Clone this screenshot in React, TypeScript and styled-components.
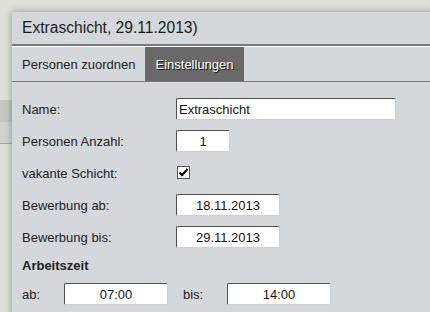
import styled, { createGlobalStyle } from "styled-components";

const GlobalStyle = createGlobalStyle`
  html, body {
    margin: 0;
    padding: 0;
    background: #dfdfda;
  }
  body {
    font-family: "Liberation Sans", Arial, sans-serif;
    color: #222;
  }
`;

const StyledPage = styled.div`
  position: relative;
  width: 430px;
  height: 312px;
  overflow: hidden;
  display: flex;
  flex-direction: column;
`;

// page content lying behind the dialog, only a few px of it show on the left
const StyledBackBand = styled.div<{ $tone: string; $height: number }>`
  height: ${(p) => p.$height}px;
  background: ${(p) => p.$tone};
  flex-shrink: 0;
`;

const StyledDialog = styled.div`
  position: absolute;
  left: 12px;
  top: 12px;
  width: 440px;
  height: 320px;
  background: #d5d8db;
  box-shadow: 0 0 7px rgba(0, 0, 0, 0.35);
  display: flex;
  flex-direction: column;
`;

const StyledHeader = styled.div`
  height: 32px;
  padding: 0 10px;
  display: flex;
  align-items: center;
  font-size: 15.6px;
  color: #1c1c1c;
  border-bottom: 2px solid #7a7a7a;
`;

const StyledTabBar = styled.div`
  display: flex;
  height: 34px;
  border-top: 1px solid #ffffff;
  border-bottom: 1px solid #7a7a7a;
`;

const StyledTab = styled.div<{ $active?: boolean }>`
  display: flex;
  align-items: center;
  padding: 0 10px;
  font-size: 13px;
  color: ${(p) => (p.$active ? "#ffffff" : "#222")};
  background: ${(p) => (p.$active ? "#696969" : "transparent")};
  text-shadow: ${(p) => (p.$active ? "1px 1px 0 #1a1a1a" : "none")};
`;

const StyledBody = styled.div`
  padding: 16px 10px 0 10px;
  display: flex;
  flex-direction: column;
  gap: 10px;
`;

const StyledRow = styled.div`
  display: grid;
  grid-template-columns: 154px auto;
  align-items: center;
  height: 22px;
  font-size: 13px;
`;

const StyledInput = styled.input<{ $width: number; $center?: boolean }>`
  box-sizing: border-box;
  width: ${(p) => p.$width}px;
  height: 22px;
  margin: 0;
  padding: 0 2px;
  font-family: "Liberation Sans", Arial, sans-serif;
  font-size: 13px;
  color: #141414;
  text-align: ${(p) => (p.$center ? "center" : "left")};
  background: #ffffff;
  border: 1px solid;
  border-color: #505050 #d0d0d0 #d0d0d0 #505050;
  border-radius: 2px;
  outline: none;
`;

const StyledCheck = styled.span`
  box-sizing: border-box;
  width: 13px;
  height: 13px;
  margin: -2px 0 0 1px;
  background: #fff;
  border: 1px solid #555;
  display: flex;
  align-items: center;
  justify-content: center;
`;

const StyledSection = styled.div`
  font-size: 13px;
  font-weight: bold;
  height: 15px;
  line-height: 15px;
  color: #222;
`;

const StyledTimeRow = styled.div`
  display: flex;
  align-items: center;
  height: 22px;
  font-size: 13px;
`;

const StyledTimeLabel = styled.span<{ $width: number; $lead?: number }>`
  width: ${(p) => p.$width}px;
  margin-left: ${(p) => p.$lead ?? 0}px;
`;

export default function App() {
  return (
    <>
      <GlobalStyle />
      <StyledPage>
        <StyledBackBand $tone="#dfdfda" $height={100} />
        <StyledBackBand $tone="#c7c8c6" $height={22} />
        <StyledBackBand $tone="#d2d3d1" $height={21} />
        <StyledBackBand $tone="#a9a9a9" $height={1} />

        <StyledDialog>
          <StyledHeader>Extraschicht, 29.11.2013)</StyledHeader>
          <StyledTabBar>
            <StyledTab>Personen zuordnen</StyledTab>
            <StyledTab $active>Einstellungen</StyledTab>
          </StyledTabBar>
          <StyledBody>
            <StyledRow>
              <span>Name:</span>
              <StyledInput $width={220} defaultValue="Extraschicht" readOnly />
            </StyledRow>
            <StyledRow>
              <span>Personen Anzahl:</span>
              <StyledInput $width={54} $center defaultValue="1" readOnly />
            </StyledRow>
            <StyledRow>
              <span>vakante Schicht:</span>
              <StyledCheck>
                <svg width="11" height="11" viewBox="0 0 11 11">
                  <path
                    d="M1.5 5.5 L4 8.2 L9.5 2"
                    fill="none"
                    stroke="#000"
                    strokeWidth="2.2"
                  />
                </svg>
              </StyledCheck>
            </StyledRow>
            <StyledRow>
              <span>Bewerbung ab:</span>
              <StyledInput $width={104} $center defaultValue="18.11.2013" readOnly />
            </StyledRow>
            <StyledRow>
              <span>Bewerbung bis:</span>
              <StyledInput $width={104} $center defaultValue="29.11.2013" readOnly />
            </StyledRow>
            <StyledSection>Arbeitszeit</StyledSection>
            <StyledTimeRow>
              <StyledTimeLabel $width={42}>ab:</StyledTimeLabel>
              <StyledInput $width={104} $center defaultValue="07:00" readOnly />
              <StyledTimeLabel $width={44} $lead={15}>bis:</StyledTimeLabel>
              <StyledInput $width={104} $center defaultValue="14:00" readOnly />
            </StyledTimeRow>
          </StyledBody>
        </StyledDialog>
      </StyledPage>
    </>
  );
}
